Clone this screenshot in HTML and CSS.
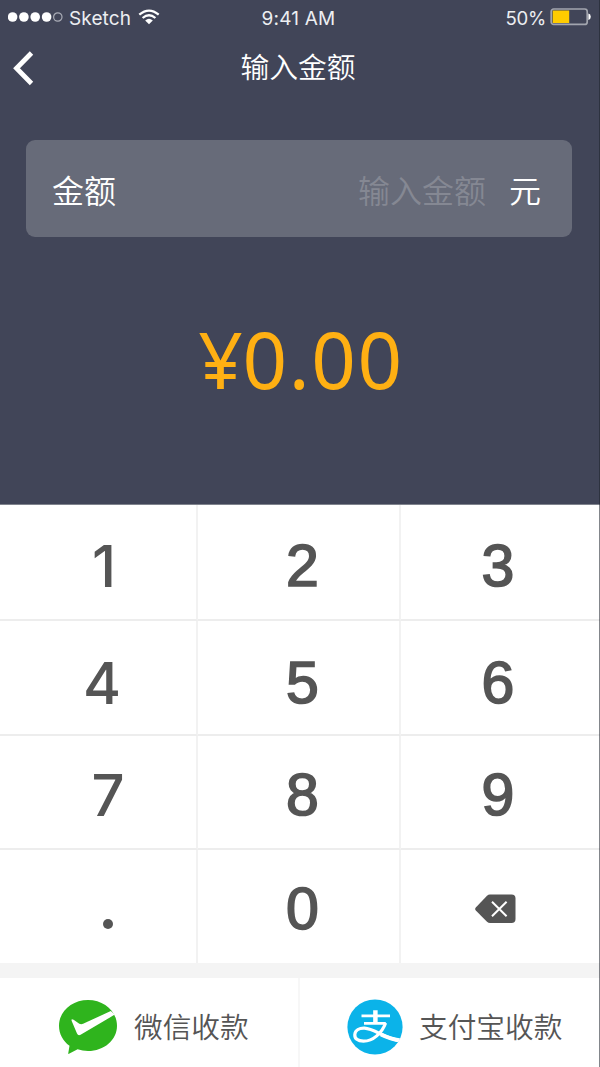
FILE: index.html
```html
<!DOCTYPE html>
<html lang="zh-CN">
<head>
<meta charset="utf-8">
<title>输入金额</title>
<link rel="stylesheet" href="styles.css">
</head>
<body>
<div class="screen">
  <header class="top">
    <div class="status">
      <div class="carrier">
        <svg class="signal" width="55" height="12" viewBox="0 0 55 12"><g fill="#fff"><circle cx="4.6" cy="6" r="4.8"/><circle cx="15.9" cy="6" r="4.8"/><circle cx="27.2" cy="6" r="4.8"/><circle cx="38.6" cy="6" r="4.8"/></g><circle cx="49.8" cy="6" r="4.2" fill="none" stroke="#a9acb6" stroke-width="1.2"/></svg>
        <span class="carrier-name">Sketch</span>
        <svg class="wifi" width="22" height="16" viewBox="0 0 22 16"><g fill="none" stroke="#fff" stroke-width="2.3"><path d="M1.3 5.7Q11 -2.5 20.7 5.7"/><path d="M4.6 9Q11 3.5 17.4 9"/></g><path d="M7.2 11.4Q11 8 14.8 11.4L11 15.2Z" fill="#fff"/></svg>
      </div>
      <span class="time">9:41 AM</span>
      <div class="power">
        <span>50%</span>
        <svg width="41" height="18" viewBox="0 0 41 18"><rect x="1.2" y="1" width="36" height="15.4" rx="2.5" fill="none" stroke="#a2a5ae" stroke-width="1.7"/><rect x="2.7" y="2.5" width="16.5" height="12.5" fill="#fc0"/><path d="M38.4 5.5q2.4 .6 2.4 3.2t-2.4 3.2z" fill="#fff"/></svg>
      </div>
    </div>
    <nav class="nav">
      <svg class="back" width="22" height="36" viewBox="0 0 22 36"><path d="M19.5 3L4.5 18.3L19.5 33.5" fill="none" stroke="#fff" stroke-width="4.8"/></svg>
      <h1 class="title">输入金额</h1>
    </nav>
    <div class="field">
      <span class="label">金额</span>
      <span class="placeholder">输入金额</span>
      <span class="unit">元</span>
    </div>
    <div class="amount"><span class="yen">¥</span>0.00</div>
  </header>
  <main class="keypad">
    <div class="key one">1</div><div class="key mid">2</div><div class="key right">3</div>
    <div class="key row2 four">4</div><div class="key row2 mid">5</div><div class="key row2 right">6</div>
    <div class="key row3 seven">7</div><div class="key row3 mid">8</div><div class="key row3 right">9</div>
    <div class="key row4"><i class="dot"></i></div><div class="key row4 mid">0</div>
    <div class="key row4 delete">
      <svg width="41" height="30" viewBox="0 0 41 30"><path d="M15 .5H36.5Q40.5 .5 40.5 4.5V25Q40.5 29 36.5 29H15Q13.4 29 12 27.7L.8 16.4Q-.5 15 .8 13.4L12 1.7Q13.3 .5 15 .5Z" fill="#555"/><path d="M17 7.8L31.6 22.2M31.6 7.8L17 22.2" stroke="#fff" stroke-width="2"/></svg>
    </div>
  </main>
  <footer class="pay">
    <div class="method wechat">
      <svg width="60" height="56" viewBox="0 0 60 56"><path d="M30 1C46 1 59 12.3 59 26.7S46 52 30 52Q24.5 52 19.6 50.2L11 54.8Q10 55.2 10.3 54L11.5 46.8C5 42 1 35 1 26.7C1 12.3 14 1 30 1Z" fill="#2fb41d"/><path d="M13.8 22.2Q12.7 19.2 15.6 20.8L21.3 24.8Q23.1 25.7 25.1 24.8L52.8 12L56.8 15.6L22.6 35.8Q20.2 37.2 19 34.5Z" fill="#fff"/></svg>
      <span>微信收款</span>
    </div>
    <div class="method alipay">
      <svg width="56" height="56" viewBox="0 0 56 56"><defs><clipPath id="disc"><circle cx="28" cy="28" r="27.6"/></clipPath></defs><circle cx="28" cy="28" r="27.6" fill="#0bb3e9"/><g clip-path="url(#disc)" fill="none" stroke="#fff"><path d="M14.5 16.8H43" stroke-width="2.8"/><path d="M28.4 11.2V24" stroke-width="4.5"/><path d="M17 24.4H38.8" stroke-width="2.7"/><path d="M38.6 24C35 34 26 42.2 16.5 42.2C10.5 42.2 7.5 39.5 7.8 35.5C8.2 31 12.5 29 17.5 29.2C28 29.8 37 39.5 55 42" stroke-width="3.2"/><path d="M34 35.5Q43 40 55 41.8" stroke-width="4"/></g></svg>
      <span>支付宝收款</span>
    </div>
  </footer>
</div>
</body>
</html>
```
FILE: styles.css
```css
* { box-sizing: border-box; }
body { margin: 0; background: #fff; }
.screen {
  width: 600px; height: 1067px; overflow: hidden;
  display: flex; flex-direction: column;
  font-family: "Inter", "Noto Sans CJK SC", sans-serif;
  color: #555; position: relative;
}
.screen::after {
  content: ""; position: absolute; top: 0; right: 0; width: 1px; height: 100%;
  background: rgba(30, 34, 44, .55);
}
.top { height: 505px; flex: none; background: #414558; color: #fff; display: flex; flex-direction: column; border-bottom: 1px solid #7f838d; }
.status { height: 36px; display: grid; grid-template-columns: 1fr auto 1fr; align-items: center; padding: 0 9px 0 8px; font-size: 19px; color: #eceef1; }
.carrier { display: flex; align-items: center; margin-top: -3px; }
.carrier-name { margin: 4px 7px 0 6px; font-size: 19px; letter-spacing: .1px; }
.time { font-size: 19px; letter-spacing: .2px; margin-left: -2px; }
.power { display: flex; align-items: center; justify-content: flex-end; gap: 4px; font-size: 18.6px; letter-spacing: -.3px; }
.power svg { margin-top: -3px; }
.nav { height: 64px; display: grid; grid-template-columns: 40px 1fr 43px; align-items: center; padding-left: 12px; }
.title { margin: 0; font-size: 28.8px; line-height: 40px; font-weight: 350; text-align: center; padding-right: 13px; }
.field { margin: 40px 28px 0 26px; height: 97px; flex: none; border-radius: 9px; background: #676b79; display: flex; align-items: center; padding: 7px 31px 0 27px; font-size: 32px; font-weight: 350; line-height: 46px; }
.label { flex: 1; margin-left: -1px; }
.placeholder { color: #858893; margin-right: 23px; }
.amount { margin-top: 69px; font: 400 78px/106px "Noto Sans", sans-serif; letter-spacing: 1.6px; color: #ffb013; text-align: center; }
.yen { margin-left: 2px; margin-right: -2px; }
.keypad { height: 458px; flex: none; display: grid; grid-template-columns: 198px 203px 199px; grid-template-rows: 116px 115px 114px 113px; background: #fff; font-size: 58px; font-weight: 500; }
.key { display: flex; align-items: center; justify-content: center; border-right: 2px solid #f2f2f2; border-bottom: 2px solid #ededed; padding-top: 7px; }
.key:nth-child(3n) { border-right: 0; }
.row2 { padding-top: 11px; }
.row3 { padding-top: 6px; }
.row4 { padding-top: 5px; border-bottom: 0; }
.mid, .right { font-family: "Liberation Sans", sans-serif; font-size: 59px; font-weight: 400; -webkit-text-stroke: 1.7px #555; }
.mid { padding-left: 8px; }
.right { padding-right: 5px; }
.one { padding-left: 12px; }
.four { padding-left: 8px; }
.seven { padding-left: 20px; }
.dot { width: 10px; height: 10px; border-radius: 50%; background: #555; margin: 30px 0 0 20px; }
.delete { padding: 5px 10px 0 0; }
.pay { flex: 1; border-top: 15px solid #f4f4f4; display: grid; grid-template-columns: 300px 300px; background: #fff; font-size: 28.7px; font-weight: 350; }
.method { display: flex; align-items: center; padding-top: 8px; }
.method span { line-height: 40px; padding-top: 3px; }
.wechat { padding-left: 58px; gap: 16px; border-right: 2px solid #f7f7f7; }
.alipay { padding-left: 47px; gap: 16px; }
```
